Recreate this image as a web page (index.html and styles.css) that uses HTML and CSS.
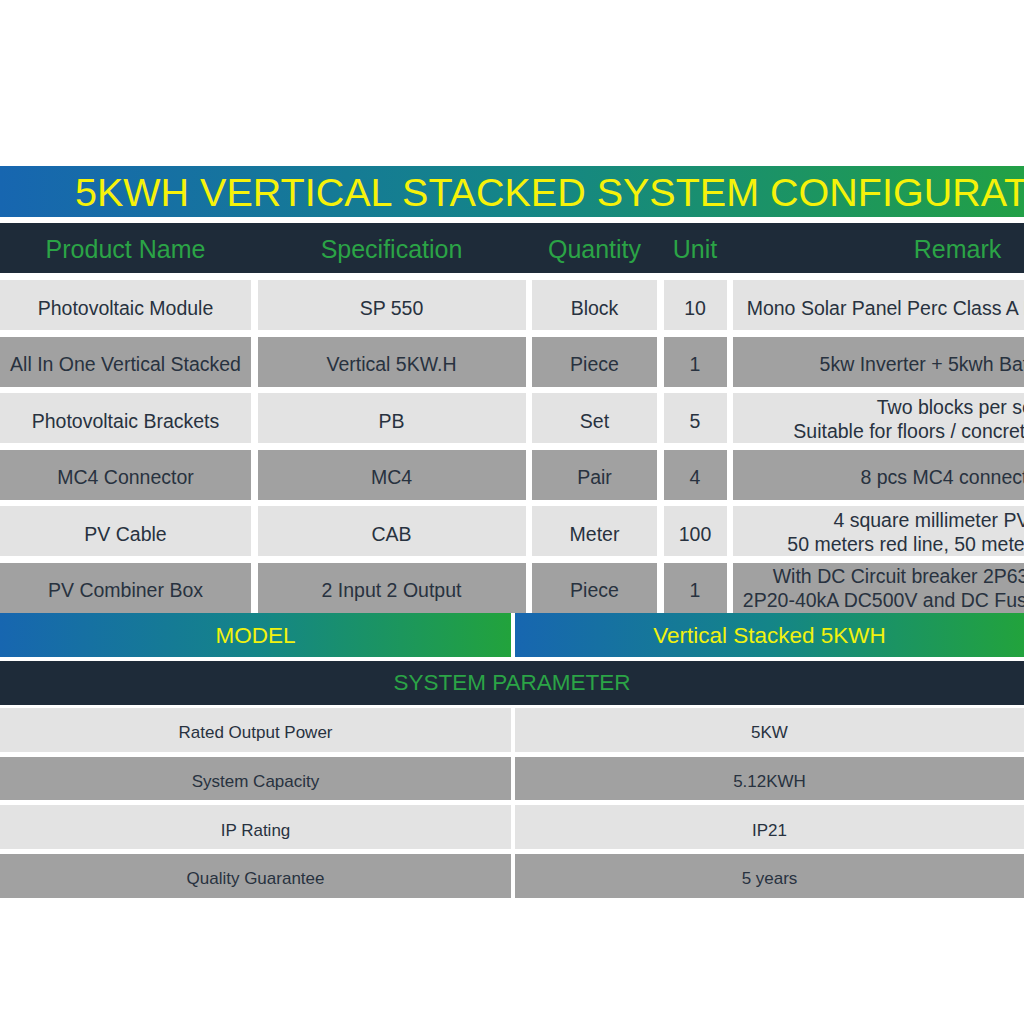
FILE: index.html
```html
<!DOCTYPE html>
<html lang="en">
<head>
<meta charset="utf-8">
<title>5KWH Vertical Stacked System Configuration</title>
<link rel="stylesheet" href="styles.css">
</head>
<body>
<div class="page">
  <div class="title-bar"><h1 class="title">5KWH VERTICAL STACKED SYSTEM CONFIGURATION</h1></div>

  <div class="config">
    <div class="config-head">
      <div class="hcell">Product Name</div>
      <div class="hcell">Specification</div>
      <div class="hcell">Quantity</div>
      <div class="hcell">Unit</div>
      <div class="hcell">Remark</div>
    </div>
    <div class="config-body">
      <div class="row light">
        <div class="cell">Photovoltaic Module</div>
        <div class="cell">SP 550</div>
        <div class="cell">Block</div>
        <div class="cell">10</div>
        <div class="cell">Mono Solar Panel Perc Class A Half Cells 550 W</div>
      </div>
      <div class="row dark">
        <div class="cell">All In One Vertical Stacked</div>
        <div class="cell">Vertical 5KW.H</div>
        <div class="cell">Piece</div>
        <div class="cell">1</div>
        <div class="cell">5kw Inverter + 5kwh Battery Set</div>
      </div>
      <div class="row light">
        <div class="cell">Photovoltaic Brackets</div>
        <div class="cell">PB</div>
        <div class="cell">Set</div>
        <div class="cell">5</div>
        <div class="cell multi">Two blocks per set<br>Suitable for floors / concrete roofs, etc</div>
      </div>
      <div class="row dark">
        <div class="cell">MC4 Connector</div>
        <div class="cell">MC4</div>
        <div class="cell">Pair</div>
        <div class="cell">4</div>
        <div class="cell">8 pcs MC4 connectors</div>
      </div>
      <div class="row light">
        <div class="cell">PV Cable</div>
        <div class="cell">CAB</div>
        <div class="cell">Meter</div>
        <div class="cell">100</div>
        <div class="cell multi">4 square millimeter PV cable<br>50 meters red line, 50 meters black line</div>
      </div>
      <div class="row dark">
        <div class="cell">PV Combiner Box</div>
        <div class="cell">2 Input 2 Output</div>
        <div class="cell">Piece</div>
        <div class="cell">1</div>
        <div class="cell multi">With DC Circuit breaker 2P63A, a DC SPD<br>2P20-40kA DC500V and DC Fuse 15A 1000V DC</div>
      </div>
    </div>
  </div>

  <div class="params">
    <div class="model-row">
      <div class="mcell">MODEL</div>
      <div class="mcell">Vertical Stacked 5KWH</div>
    </div>
    <div class="param-head">SYSTEM PARAMETER</div>
    <div class="param-body">
      <div class="prow light">
        <div class="pcell">Rated Output Power</div>
        <div class="pcell">5KW</div>
      </div>
      <div class="prow dark">
        <div class="pcell">System Capacity</div>
        <div class="pcell">5.12KWH</div>
      </div>
      <div class="prow light">
        <div class="pcell">IP Rating</div>
        <div class="pcell">IP21</div>
      </div>
      <div class="prow dark">
        <div class="pcell">Quality Guarantee</div>
        <div class="pcell">5 years</div>
      </div>
    </div>
  </div>
</div>
</body>
</html>
```

FILE: styles.css
```css
html, body {
  margin: 0;
  padding: 0;
  background: #ffffff;
  overflow: hidden;
}

body {
  width: 1024px;
  height: 1024px;
  font-family: "Liberation Sans", Arial, sans-serif;
  color: #28323f;
}

.page {
  width: 1024px;
  padding-top: 166px;
  overflow: hidden;
}

.title-bar {
  height: 51px;
  width: 1024px;
  background: linear-gradient(90deg, #1766b0 0%, #148588 50%, #22a046 100%);
  display: flex;
  align-items: center;
  overflow: hidden;
  white-space: nowrap;
}

.title {
  margin: 2px 0 0 75px;
  font-weight: normal;
  font-size: 39.5px;
  line-height: 1;
  color: #f6f20a;
}

.config {
  margin-top: 6px;
  width: 1024px;
  overflow: hidden;
}

.config-head,
.row {
  display: grid;
  grid-template-columns: 251px 268px 125px 63px 449px;
  column-gap: 6.5px;
  width: 1181px;
}

.config-head {
  height: 50px;
  background: #1e2b39;
  align-items: center;
}

.hcell {
  text-align: center;
  font-size: 25px;
  color: #2ba446;
  white-space: nowrap;
  padding-top: 2px;
}

.config-body {
  margin-top: 7px;
  display: flex;
  flex-direction: column;
  gap: 6.6px;
}

.row {
  height: 50px;
}

.cell {
  display: flex;
  align-items: center;
  justify-content: center;
  text-align: center;
  font-size: 19.5px;
  white-space: nowrap;
  padding-top: 6px;
  box-sizing: border-box;
}

.cell.multi {
  line-height: 24px;
  padding-top: 1px;
}

.light .cell,
.light .pcell {
  background: #e3e3e3;
}

.dark .cell,
.dark .pcell {
  background: #a1a1a1;
}

.params {
  width: 1024px;
}

.model-row {
  display: grid;
  grid-template-columns: 511px 509px;
  column-gap: 4px;
  height: 44px;
}

.mcell {
  background: linear-gradient(90deg, #1766b0 0%, #148588 50%, #22a33c 100%);
  color: #f2f20e;
  font-size: 22.5px;
  display: flex;
  align-items: center;
  justify-content: center;
  padding-top: 3px;
  box-sizing: border-box;
}

.param-head {
  margin-top: 4px;
  height: 44px;
  background: #1e2b39;
  color: #2ba446;
  font-size: 22.5px;
  display: flex;
  align-items: center;
  justify-content: center;
  padding-top: 1px;
  box-sizing: border-box;
}

.param-body {
  margin-top: 3px;
  display: flex;
  flex-direction: column;
  gap: 5px;
}

.prow {
  display: grid;
  grid-template-columns: 511px 509px;
  column-gap: 4px;
  height: 43.7px;
}

.pcell {
  display: flex;
  align-items: center;
  justify-content: center;
  font-size: 17px;
  padding-top: 7px;
  box-sizing: border-box;
}
```
